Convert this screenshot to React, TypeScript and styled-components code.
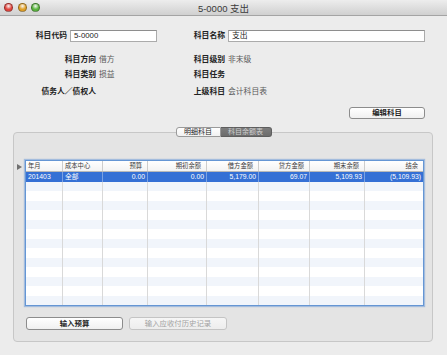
import React from 'react'
import styled, {createGlobalStyle} from 'styled-components'

const GlobalStyle = createGlobalStyle`
  html, body {
    margin: 0;
    padding: 0;
    background: #ececec;
  }
  body {
    font-family: 'Liberation Sans', 'Noto Sans CJK SC', sans-serif;
  }
`

const FONT = `'Liberation Sans', 'Noto Sans CJK SC', sans-serif`

const Window = styled.div`
  width: 447px;
  height: 355px;
  background: #ececec;
  overflow: hidden;
  color: #222;
  font-family: ${FONT};
`

const TitleBar = styled.div`
  height: 15px;
  display: grid;
  grid-template-columns: 1fr auto 1fr;
  align-items: center;
  background: linear-gradient(#ededed, #d0d0d0);
  border-bottom: 1px solid #a4a4a4;
`

const Lights = styled.div`
  display: flex;
  gap: 4.5px;
  padding-left: 4px;
`

const Light = styled.span<{$c: string}>`
  width: 9px;
  height: 9px;
  box-sizing: border-box;
  border-radius: 50%;
  border: 0.5px solid rgba(0, 0, 0, 0.35);
  background: radial-gradient(circle at 50% 30%, rgba(255, 255, 255, 0.75) 0, ${p => p.$c} 55%);
`

const Title = styled.div`
  font-size: 9.5px;
  color: #3a3a3a;
  white-space: nowrap;
`

const InputRow = styled.div`
  margin-top: 14px;
  display: grid;
  grid-template-columns: 67px 87px 65px 197px;
  column-gap: 3px;
  align-items: center;
  height: 12px;
`

const Label = styled.span`
  font-size: 7.8px;
  font-weight: bold;
  line-height: 12px;
  text-align: right;
  white-space: nowrap;
  color: #222;
`

const TextBox = styled.div`
  height: 12px;
  box-sizing: border-box;
  border: 1px solid #ababab;
  border-top-color: #8e8e8e;
  background: #fff;
  font-size: 7.8px;
  line-height: 10px;
  padding-left: 3px;
  color: #222;
`

const InfoGrid = styled.div`
  margin-top: 12px;
  display: grid;
  grid-template-columns: 96px 91px 32px auto;
  grid-template-rows: 15px 17px 12px;
  column-gap: 3px;
`

const Value = styled.span`
  font-size: 7.8px;
  line-height: 12px;
  color: #5a5a5a;
  white-space: nowrap;
`

const ActionRow = styled.div`
  margin-top: 9px;
  display: flex;
  justify-content: flex-end;
  padding-right: 22px;
`

const PushButton = styled.button<{$w: number; $h?: number; $disabled?: boolean}>`
  width: ${p => p.$w}px;
  height: ${p => p.$h ?? 12}px;
  box-sizing: border-box;
  padding: 0;
  margin: 0;
  border-radius: 3px;
  border: 1px solid ${p => (p.$disabled ? '#c4c4c4' : '#8c8c8c')};
  background: ${p => (p.$disabled ? 'linear-gradient(#f6f6f6, #ededed)' : 'linear-gradient(#ffffff, #f0f0f0)')};
  font-family: ${FONT};
  font-size: 7.4px;
  font-weight: ${p => (p.$disabled ? 'normal' : 'bold')};
  color: ${p => (p.$disabled ? '#a2a2a2' : '#222')};
  line-height: 10px;
`

const TabBar = styled.div`
  margin-top: 8px;
  margin-bottom: -5px;
  position: relative;
  z-index: 1;
  display: flex;
  justify-content: center;
  height: 10px;
`

const Tab = styled.div<{$active?: boolean; $first?: boolean}>`
  height: 10px;
  box-sizing: border-box;
  padding: 0 7.5px;
  font-size: 7px;
  line-height: 8px;
  white-space: nowrap;
  border: 1px solid ${p => (p.$active ? '#5e5e5e' : '#9a9a9a')};
  border-left-width: ${p => (p.$first ? 1 : 0)}px;
  border-radius: ${p => (p.$first ? '3px 0 0 3px' : '0 3px 3px 0')};
  background: ${p => (p.$active ? 'linear-gradient(#7d7d7d, #6c6c6c)' : 'linear-gradient(#ffffff, #f1f1f1)')};
  color: ${p => (p.$active ? '#cfcfcf' : '#222')};
`

const GroupBox = styled.div`
  margin: 0 14px 0 13px;
  border: 1px solid #c7c7c7;
  border-radius: 4px;
  background: #e4e4e4;
  padding: 27px 8px 11px 0;
`

const TableArea = styled.div`
  display: flex;
  align-items: flex-start;
`

const Disclosure = styled.svg`
  flex: none;
  margin: 4px 3px 0 3px;
`

const Table = styled.div`
  width: 399px;
  box-sizing: border-box;
  border: 1px solid #6596d4;
  box-shadow: 0 0 1px 1px rgba(110, 155, 215, 0.55);
  background: #fff;
`

const COLS = '37px 40px 45px 59px 52px 51px 55px 58px'

const HeaderRow = styled.div`
  display: grid;
  grid-template-columns: ${COLS};
  height: 10px;
  border-bottom: 1px solid #b9b9b9;
  background: linear-gradient(#ffffff, #f3f3f3);
`

const HeadCell = styled.div<{$right?: boolean}>`
  font-size: 6.3px;
  line-height: 10px;
  color: #3a3a3a;
  white-space: nowrap;
  overflow: hidden;
  text-align: ${p => (p.$right ? 'right' : 'left')};
  padding: ${p => (p.$right ? '0 5px 0 0' : '0 0 0 2px')};
  border-right: 1px solid #cdcdcd;
  &:last-child {
    border-right: none;
  }
`

const BodyRow = styled.div<{$stripe?: boolean; $selected?: boolean}>`
  display: grid;
  grid-template-columns: ${COLS};
  height: 9.5px;
  background: ${p => (p.$selected ? '#3570d5' : p.$stripe ? '#f1f5fb' : '#fff')};
  color: ${p => (p.$selected ? '#fff' : '#222')};
`

const Cell = styled.div<{$right?: boolean; $selected?: boolean}>`
  font-size: 6.8px;
  line-height: 9.5px;
  white-space: nowrap;
  overflow: hidden;
  text-align: ${p => (p.$right ? 'right' : 'left')};
  padding: ${p => (p.$right ? '0 2px 0 0' : '0 0 0 2px')};
  border-right: 1px solid ${p => (p.$selected ? 'rgba(255,255,255,0.35)' : '#d9d9d9')};
  &:last-child {
    border-right: none;
  }
`

const BottomButtons = styled.div`
  margin-top: 11px;
  padding-left: 12px;
  display: flex;
  gap: 6px;
`

const headers = ['年月', '成本中心', '预算', '期初余额', '借方金额', '贷方金额', '期末余额', '结余']
const selected = ['201403', '全部', '0.00', '0.00', '5,179.00', '69.07', '5,109.93', '(5,109.93)']
const ROWS = 14

export default function App() {
  return (
    <>
      <GlobalStyle />
      <Window>
        <TitleBar>
          <Lights>
            <Light $c="#e2463f" />
            <Light $c="#e0a028" />
            <Light $c="#5bb540" />
          </Lights>
          <Title>5-0000 支出</Title>
          <span />
        </TitleBar>

        <InputRow>
          <Label>科目代码</Label>
          <TextBox>5-0000</TextBox>
          <Label>科目名称</Label>
          <TextBox>支出</TextBox>
        </InputRow>

        <InfoGrid>
          <Label>科目方向</Label>
          <Value>借方</Value>
          <Label>科目级别</Label>
          <Value>非末级</Value>
          <Label>科目类别</Label>
          <Value>损益</Value>
          <Label>科目任务</Label>
          <Value />
          <Label>债务人／债权人</Label>
          <Value />
          <Label>上级科目</Label>
          <Value>会计科目表</Value>
        </InfoGrid>

        <ActionRow>
          <PushButton $w={76}>编辑科目</PushButton>
        </ActionRow>

        <TabBar>
          <Tab $first>明细科目</Tab>
          <Tab $active>科目余额表</Tab>
        </TabBar>

        <GroupBox>
          <TableArea>
            <Disclosure width="5" height="6" viewBox="0 0 5 6">
              <path d="M0 0 L5 3 L0 6 Z" fill="#707070" />
            </Disclosure>
            <Table>
              <HeaderRow>
                {headers.map((h, i) => (
                  <HeadCell key={h} $right={i > 1}>
                    {h}
                  </HeadCell>
                ))}
              </HeaderRow>
              {Array.from({length: ROWS}).map((_, r) => (
                <BodyRow key={r} $selected={r === 0} $stripe={r % 2 === 1}>
                  {headers.map((h, i) => (
                    <Cell key={h} $right={i > 1} $selected={r === 0}>
                      {r === 0 ? selected[i] : ''}
                    </Cell>
                  ))}
                </BodyRow>
              ))}
            </Table>
          </TableArea>
          <BottomButtons>
            <PushButton $w={97} $h={13}>输入预算</PushButton>
            <PushButton $w={98} $h={13} $disabled>
              输入应收付历史记录
            </PushButton>
          </BottomButtons>
        </GroupBox>
      </Window>
    </>
  )
}
